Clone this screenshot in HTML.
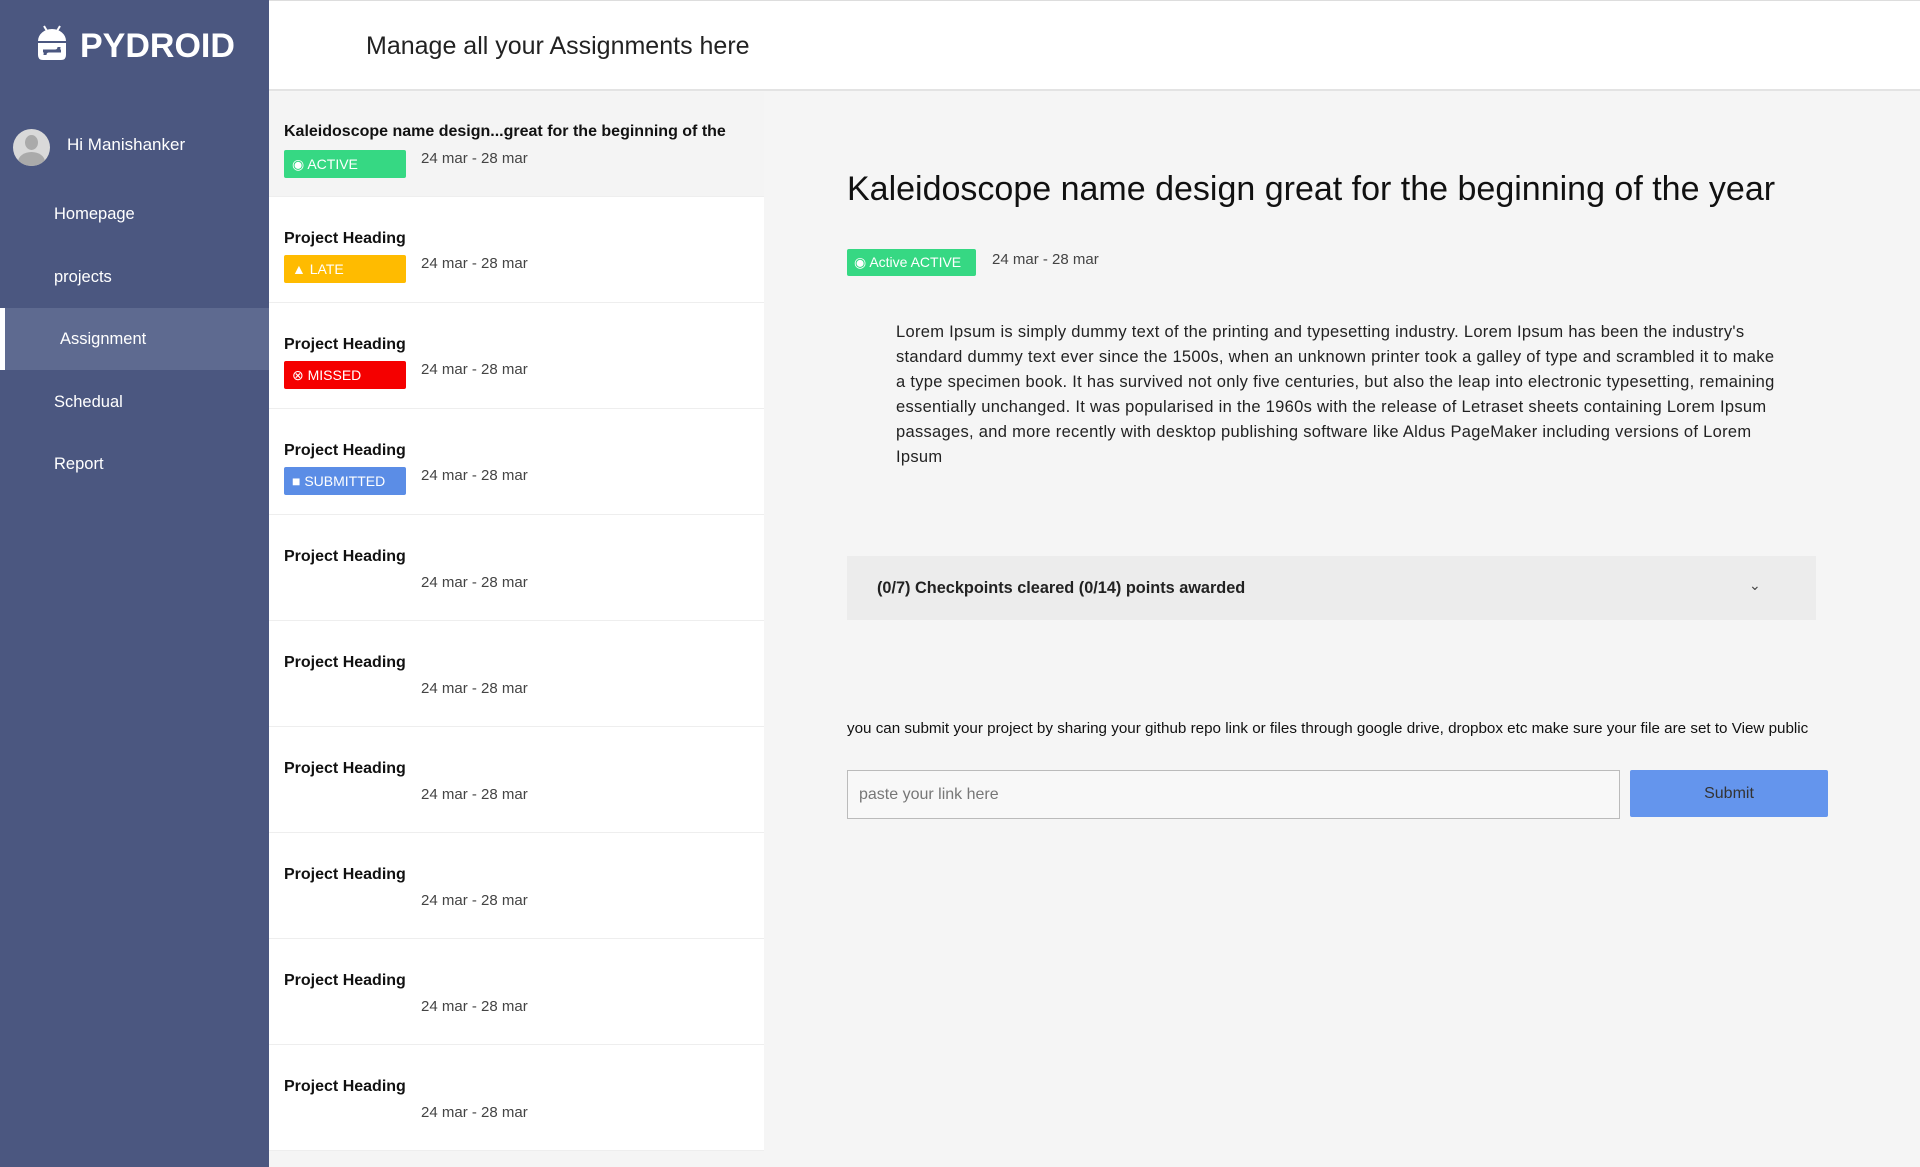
<!DOCTYPE html>
<html><head><meta charset="utf-8"><style>
*{margin:0;padding:0;box-sizing:border-box}
body{width:1920px;height:1167px;overflow:hidden;font-family:"Liberation Sans",sans-serif;background:#f5f5f5;position:relative;color:#222}
.a{position:absolute;white-space:nowrap}
#side{position:absolute;left:0;top:0;width:269px;height:1167px;background:#4b5780}
.nav{position:absolute;left:54px;color:#fff;font-size:16.5px}
#hdr{position:absolute;left:269px;top:0;width:1651px;height:91px;background:#fff;border-bottom:2px solid #e3e3e3;border-top:1px solid #ddd}
.item{position:absolute;left:269px;width:495px;height:106px;background:#fff;border-bottom:1px solid #eee}
.item .t{position:absolute;left:15px;top:33px;font-size:16px;font-weight:bold;color:#111}
.item .d{position:absolute;left:152px;top:58px;font-size:15px;color:#444}
.badge{position:absolute;left:15px;top:58px;width:122px;height:28px;color:#fff;font-size:14px;line-height:28px;padding-left:8px;border-radius:2px}
</style></head><body>
<div id="side">
  <svg class="a" style="left:35px;top:25px" width="34" height="36" viewBox="0 0 34 36">
    <line x1="9" y1="1" x2="12" y2="6" stroke="#fff" stroke-width="2"/><line x1="25" y1="1" x2="22" y2="6" stroke="#fff" stroke-width="2"/>
    <path d="M3 16 A14 12 0 0 1 31 16 Z" fill="#fff"/>
    <path d="M3 18 H31 V30 Q31 35 26 35 H8 Q3 35 3 30 Z" fill="#fff"/>
    <path d="M8 26 H20 Q24 26 24 22" stroke="#4b5780" stroke-width="3" fill="none"/>
    <path d="M26 26 H14 Q10 26 10 30" stroke="#4b5780" stroke-width="3" fill="none"/>
  </svg>
  <div class="a" style="left:80px;top:27px;font-size:34px;font-weight:bold;color:#fff">PYDROID</div>
  <div class="a" style="left:13px;top:129px;width:37px;height:37px;border-radius:50%;background:#d9d9d9;overflow:hidden">
    <div style="position:absolute;left:12px;top:6px;width:13px;height:15px;border-radius:50%;background:#aaa"></div>
    <div style="position:absolute;left:5px;top:23px;width:27px;height:20px;border-radius:50%;background:#aaa"></div>
  </div>
  <div class="a" style="left:67px;top:135px;font-size:17px;color:#fff">Hi Manishanker</div>
  <div class="nav a" style="top:205px">Homepage</div>
  <div class="nav a" style="top:268px">projects</div>
  <div class="a" style="left:0;top:308px;width:269px;height:62px;background:#5e6a90;border-left:5px solid #fff"></div>
  <div class="nav a" style="left:60px;top:330px">Assignment</div>
  <div class="nav a" style="top:393px">Schedual</div>
  <div class="nav a" style="top:455px">Report</div>
</div>
<div id="hdr"><div class="a" style="left:97px;top:31px;font-size:25px;color:#222">Manage all your Assignments here</div></div>

<div class="item" style="top:92px;height:105px;background:#f4f4f4"><div class="t" style="top:31px">Kaleidoscope name design...great for the beginning of the</div><div class="badge" style="top:58px;background:#36d883">◉ ACTIVE</div><div class="d" style="top:58px">24 mar - 28 mar</div></div>
<div class="item" style="top:197px"><div class="t">Project Heading</div><div class="badge" style="background:#ffbb00">▲ LATE</div><div class="d">24 mar - 28 mar</div></div>
<div class="item" style="top:303px"><div class="t">Project Heading</div><div class="badge" style="background:#f50000">⊗ MISSED</div><div class="d">24 mar - 28 mar</div></div>
<div class="item" style="top:409px"><div class="t">Project Heading</div><div class="badge" style="background:#5b8de6">■ SUBMITTED</div><div class="d">24 mar - 28 mar</div></div>
<div class="item" style="top:515px"><div class="t">Project Heading</div><div class="d" style="top:59px">24 mar - 28 mar</div></div>
<div class="item" style="top:621px"><div class="t">Project Heading</div><div class="d" style="top:59px">24 mar - 28 mar</div></div>
<div class="item" style="top:727px"><div class="t">Project Heading</div><div class="d" style="top:59px">24 mar - 28 mar</div></div>
<div class="item" style="top:833px"><div class="t">Project Heading</div><div class="d" style="top:59px">24 mar - 28 mar</div></div>
<div class="item" style="top:939px"><div class="t">Project Heading</div><div class="d" style="top:59px">24 mar - 28 mar</div></div>
<div class="item" style="top:1045px"><div class="t">Project Heading</div><div class="d" style="top:59px">24 mar - 28 mar</div></div>

<div class="a" style="left:847px;top:170px;font-size:34px;color:#111">Kaleidoscope name design great for the beginning of the year</div>
<div class="a" style="left:847px;top:249px;width:129px;height:27px;background:#36d883;color:#fff;font-size:14px;line-height:27px;padding-left:7px;border-radius:2px">◉ Active ACTIVE</div>
<div class="a" style="left:992px;top:251px;font-size:15px;color:#444">24 mar - 28 mar</div>
<div class="a" style="left:896px;top:320px;width:890px;white-space:normal;font-size:16.5px;letter-spacing:0.3px;line-height:25px;color:#222">Lorem Ipsum is simply dummy text of the printing and typesetting industry. Lorem Ipsum has been the industry's standard dummy text ever since the 1500s, when an unknown printer took a galley of type and scrambled it to make a type specimen book. It has survived not only five centuries, but also the leap into electronic typesetting, remaining essentially unchanged. It was popularised in the 1960s with the release of Letraset sheets containing Lorem Ipsum passages, and more recently with desktop publishing software like Aldus PageMaker including versions of Lorem Ipsum</div>
<div class="a" style="left:847px;top:556px;width:969px;height:64px;background:#ececec"></div>
<div class="a" style="left:877px;top:579px;font-size:16.3px;font-weight:bold;color:#222">(0/7) Checkpoints cleared (0/14) points awarded</div>
<div class="a" style="left:1749px;top:577px;font-size:14px;color:#444">⌄</div>
<div class="a" style="left:847px;top:720px;font-size:15.2px;color:#111">you can submit your project by sharing your github repo link or files through google drive, dropbox etc make sure your file are set to View public</div>
<div class="a" style="left:847px;top:770px;width:773px;height:49px;border:1px solid #bbb;background:#f8f8f8;font-size:16px;color:#777;line-height:47px;padding-left:11px">paste your link here</div>
<div class="a" style="left:1630px;top:770px;width:198px;height:47px;background:#6495ed;border-radius:2px;font-size:16px;color:#333;line-height:47px;text-align:center">Submit</div>
</body></html>
